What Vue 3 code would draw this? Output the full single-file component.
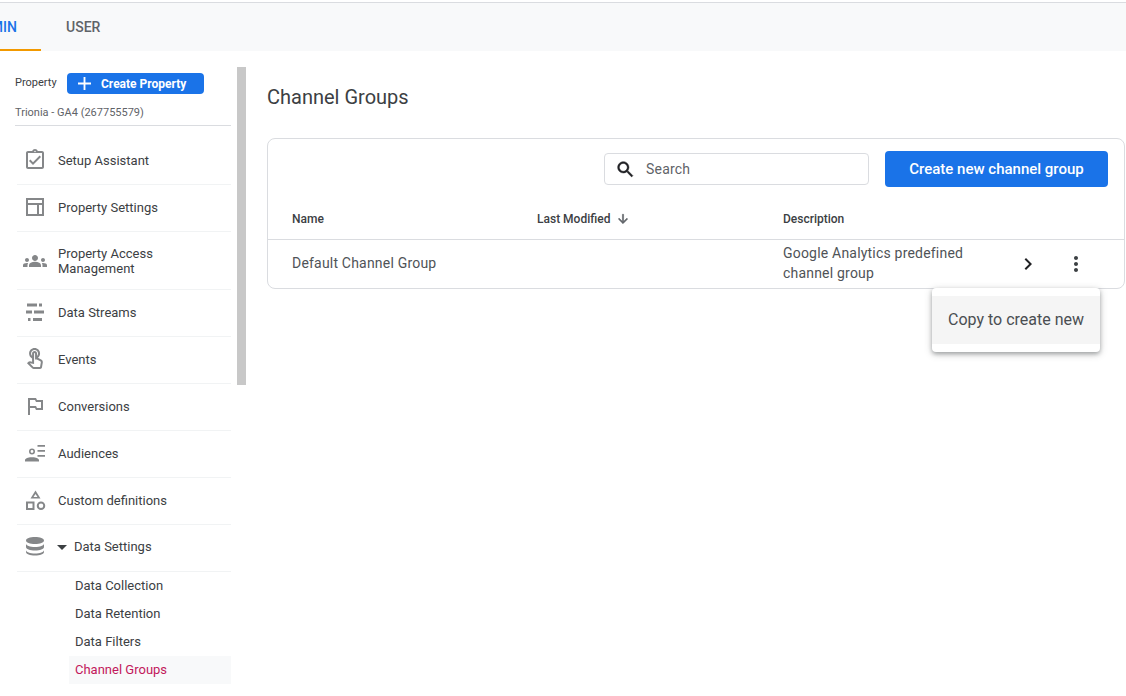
<template>
	<div class="page">
		<div class="tabs">
			<div class="tab tab-active">ADMIN</div>
			<div class="tab">USER</div>
		</div>

		<div class="content">
			<aside class="sidebar">
				<div class="property-head">
					<span class="property-label">Property</span>
					<button class="create-property">
						<svg class="plus" viewBox="0 0 14 14"><path d="M6 0h2v6h6v2H8v6H6V8H0V6h6z" /></svg>
						<span>Create Property</span>
					</button>
				</div>
				<div class="property-name">Trionia - GA4 (267755579)</div>

				<nav class="nav">
					<div
						v-for="item in navItems"
						:key="item.label"
						class="nav-row"
						:class="{ 'nav-tall': item.tall, 'nav-open': item.open }"
					>
						<svg class="nav-icon" viewBox="0 0 24 24"><path :d="item.icon" fill-rule="evenodd" /></svg>
						<span v-if="item.open" class="caret"></span>
						<span class="nav-label">{{ item.label }}</span>
					</div>
					<div class="sub-nav">
						<div
							v-for="sub in subItems"
							:key="sub"
							class="sub-row"
							:class="{ 'sub-active': sub === 'Channel Groups' }"
						>{{ sub }}</div>
					</div>
				</nav>
				<div class="scroll-thumb"></div>
			</aside>

			<main class="main">
				<h1 class="title">Channel Groups</h1>

				<section class="card">
					<div class="toolbar">
						<div class="search">
							<svg class="search-icon" viewBox="0 0 24 24"><path d="M15.5 14h-.79l-.28-.27C15.41 12.59 16 11.11 16 9.5 16 5.91 13.09 3 9.5 3S3 5.91 3 9.5 5.91 16 9.5 16c1.61 0 3.09-.59 4.23-1.57l.27.28v.79l5 4.99L20.49 19l-4.99-5zm-6 0C7.01 14 5 11.99 5 9.5S7.01 5 9.5 5 14 7.01 14 9.5 11.99 14 9.5 14z" /></svg>
							<span>Search</span>
						</div>
						<button class="create-group">Create new channel group</button>
					</div>

					<div class="table-head">
						<span>Name</span>
						<span class="sort-col">
							Last Modified
							<svg class="sort-icon" viewBox="0 0 24 24"><path d="M20 12l-1.41-1.41L13 16.17V4h-2v12.17l-5.58-5.59L4 12l8 8 8-8z" /></svg>
						</span>
						<span>Description</span>
					</div>

					<div class="table-row">
						<span>Default Channel Group</span>
						<span></span>
						<span class="desc">Google Analytics predefined channel group</span>
						<span class="actions">
							<svg class="chevron" viewBox="0 0 24 24"><path d="M8.59 16.59L13.17 12 8.59 7.41 10 6l6 6-6 6z" /></svg>
							<svg class="kebab" viewBox="0 0 24 24"><path d="M12 8c1.1 0 2-.9 2-2s-.9-2-2-2-2 .9-2 2 .9 2 2 2zm0 2c-1.1 0-2 .9-2 2s.9 2 2 2 2-.9 2-2-.9-2-2-2zm0 6c-1.1 0-2 .9-2 2s.9 2 2 2 2-.9 2-2-.9-2-2-2z" /></svg>
						</span>
					</div>

					<div class="menu">
						<div class="menu-item">Copy to create new</div>
					</div>
				</section>
			</main>
		</div>
	</div>
</template>

<script setup>
const navItems = [
	{
		label: 'Setup Assistant',
		icon: 'M19 3h-4.18C14.4 1.84 13.3 1 12 1s-2.4.84-2.82 2H5c-1.1 0-2 .9-2 2v14c0 1.1.9 2 2 2h14c1.1 0 2-.9 2-2V5c0-1.1-.9-2-2-2zm-7-.25c.41 0 .75.34.75.75s-.34.75-.75.75-.75-.34-.75-.75.34-.75.75-.75zM19 19H5V5h14v14zM18 9l-1.41-1.42-6.59 6.59-2.58-2.57-1.42 1.41 4 4z',
	},
	{
		label: 'Property Settings',
		icon: 'M3 3h18v18H3zM5 5v3h14V5zM5 10v9h9v-9zM16 10v9h3v-9z',
	},
	{
		label: 'Property Access Management',
		tall: true,
		icon: 'M4 13c1.1 0 2-.9 2-2s-.9-2-2-2-2 .9-2 2 .9 2 2 2zm1.13 1.1C4.76 14.04 4.39 14 4 14c-.99 0-1.93.21-2.78.58C.48 14.9 0 15.62 0 16.43V18h4.5v-1.61c0-.83.23-1.61.63-2.29zM20 13c1.1 0 2-.9 2-2s-.9-2-2-2-2 .9-2 2 .9 2 2 2zm4 3.43c0-.81-.48-1.53-1.22-1.85C21.93 14.21 20.99 14 20 14c-.39 0-.76.04-1.13.1.4.68.63 1.46.63 2.29V18H24v-1.57zm-7.76-2.78c-1.17-.52-2.61-.9-4.24-.9s-3.07.39-4.24.9C6.68 14.13 6 15.21 6 16.39V18h12v-1.61c0-1.18-.68-2.26-1.76-2.74zM12 12c1.66 0 3-1.34 3-3s-1.34-3-3-3-3 1.34-3 3 1.34 3 3 3z',
	},
	{
		label: 'Data Streams',
		icon: 'M4 3.500h10v3H4zM16 3.500h3v3h-3zM3 10.500h6v3H3zM11 10.500h10v3H11zM5 18h2.500v3H5zM10 18h9v3h-9z',
	},
	{
		label: 'Events',
		icon: 'M18.19 12.44l-3.24-1.62c1.29-1 2.12-2.56 2.12-4.32 0-3.03-2.47-5.5-5.5-5.5s-5.5 2.47-5.5 5.5c0 2.13 1.22 3.98 3 4.89v3.26c-2.15-.46-2.02-.44-2.26-.44-.53 0-1.03.21-1.41.59L4 16.22l5.09 5.09c.43.44 1.03.69 1.65.69h6.3c.98 0 1.81-.7 1.97-1.67l.8-4.71c.22-1.3-.43-2.58-1.62-3.18zm-.35 2.85L17.04 20h-6.3c-.09 0-.17-.04-.24-.1l-3.68-3.68 4.25.89V6.5c0-.28.22-.5.5-.5s.5.22.5.5v6h1.76l3.46 1.73c.39.2.61.63.55 1.06zM8.07 6.5c0-1.93 1.57-3.5 3.5-3.5s3.5 1.57 3.5 3.5c0 .95-.38 1.81-1 2.44V6.5c0-1.38-1.12-2.5-2.5-2.5s-2.5 1.12-2.5 2.5v2.44c-.62-.63-1-1.49-1-2.44z',
	},
	{
		label: 'Conversions',
		icon: 'M14 6l-1-2H5v17h2v-7h5l1 2h7V6h-6zm4 8h-4l-1-2H7V6h5l1 2h5v6z',
	},
	{
		label: 'Audiences',
		icon: 'M9 7.500a3 3 0 1 1 0 6 3 3 0 0 1 0-6zm0 1.600a1.400 1.400 0 1 0 0 2.800 1.400 1.400 0 0 0 0-2.800zM2 20.500v-1.500c0-1.500 3.500-2.700 6-2.700h2c2.500 0 6 1.200 6 2.700v1.500zM14.500 4h7.500v1.700h-7.500zM14.500 9h7.500v1.700h-7.500zM14.500 14h7.500v1.700h-7.500z',
	},
	{
		label: 'Custom definitions',
		icon: 'M12.500 2.500l5 8h-10zM12.500 6l-2 3h4zM3 13.500h8.500V22H3zM5 15.500V20h4.500v-4.500zM18 13.500a4.250 4.250 0 1 1 0 8.500 4.250 4.250 0 0 1 0-8.500zm0 2a2.250 2.250 0 1 0 0 4.500 2.250 2.250 0 0 0 0-4.500z',
	},
	{
		label: 'Data Settings',
		open: true,
		icon: 'M3 6.500C3 4.500 7 3 12 3s9 1.500 9 3.500S17 10 12 10 3 8.500 3 6.500zM3 9.500c0 2 4 3.500 9 3.500s9-1.500 9-3.500v3.500c0 2-4 3.500-9 3.500S3 15 3 13zM3 16c0 2 4 3.500 9 3.500s9-1.500 9-3.500v2c0 2-4 3.500-9 3.500S3 20 3 18z',
	},
];

const subItems = ['Data Collection', 'Data Retention', 'Data Filters', 'Channel Groups'];
</script>

<style scoped>
.page {
	width: 1126px;
	height: 696px;
	overflow: hidden;
	background: #fff;
	font-family: Roboto, "Liberation Sans", sans-serif;
	color: #3c4043;
}

/* Tabs */
.tabs {
	display: flex;
	height: 48px;
	margin-top: 2px;
	border-top: 1px solid #dadce0;
	background: #f8f9fa;
}

.tab {
	display: flex;
	align-items: center;
	padding: 2px 25px 0;
	font-size: 14px;
	font-weight: 500;
	color: #5f6368;
	border-bottom: 2px solid transparent;
}

.tab-active {
	justify-content: flex-end;
	width: 100px;
	margin-left: -59px;
	padding-right: 24px;
	box-sizing: border-box;
	color: #1a73e8;
	border-bottom-color: #f29900;
}

.content {
	display: flex;
}

/* Sidebar */
.sidebar {
	position: relative;
	width: 216px;
	flex-shrink: 0;
	padding: 22px 16px 0 15px;
}

.property-head {
	display: flex;
	align-items: center;
	height: 21px;
}

.property-label {
	width: 52px;
	padding-bottom: 2px;
	font-size: 11px;
}

.create-property {
	display: flex;
	align-items: center;
	width: 137px;
	height: 21px;
	padding: 0 0 0 11px;
	border: 0;
	border-radius: 4px;
	background: #1a73e8;
	color: #fff;
	font-family: Roboto, sans-serif;
	font-size: 12px;
	font-weight: 700;
}

.plus {
	width: 13px;
	height: 13px;
	margin-right: 10px;
	fill: #fff;
}

.property-name {
	height: 32px;
	padding-top: 12px;
	box-sizing: border-box;
	border-bottom: 1px solid #dadce0;
	font-size: 11px;
	line-height: 13px;
	color: #5f6368;
}

.nav {
	margin: 12px 0 0 2px;
}

.nav-row {
	display: flex;
	align-items: center;
	min-height: 47px;
	padding: 12px 0 14px 6px;
	box-sizing: border-box;
	border-bottom: 1px solid #f1f3f4;
	font-size: 13px;
	line-height: 15px;
}

.nav-tall {
	padding: 14px 0 13px 6px;
}

.nav-open {
	padding-bottom: 16px;
}

.nav-icon {
	width: 24px;
	height: 24px;
	margin: -6px 11px -6px 0;
	flex-shrink: 0;
	fill: #858789;
}

.nav-label {
	width: 130px;
}

.caret {
	width: 0;
	height: 0;
	margin: 2px 7px 0 -1px;
	border-left: 5px solid transparent;
	border-right: 5px solid transparent;
	border-top: 5px solid #3c4043;
}

.sub-nav {
	padding-left: 52px;
}

.sub-row {
	height: 28px;
	padding-left: 6px;
	font-size: 13px;
	line-height: 27px;
}

.sub-active {
	background: #f8f9fa;
	color: #c2185b;
}

.scroll-thumb {
	position: absolute;
	top: 16px;
	left: 237px;
	width: 9px;
	height: 318px;
	background: #c8c8c8;
}

/* Main */
.main {
	flex: 1;
	min-width: 0;
	padding-left: 20px;
}

.title {
	height: 53px;
	margin: 34px 0 0;
	font-size: 20px;
	font-weight: 400;
	line-height: 24px;
	color: #3c4043;
}

.card {
	position: relative;
	width: 858px;
	height: 151px;
	box-sizing: border-box;
	border: 1px solid #dadce0;
	border-radius: 8px;
}

.toolbar {
	display: flex;
	justify-content: flex-end;
	align-items: center;
	gap: 16px;
	height: 60px;
	padding-right: 16px;
}

.search {
	display: flex;
	align-items: center;
	width: 265px;
	height: 32px;
	box-sizing: border-box;
	padding-left: 10px;
	border: 1px solid #dadce0;
	border-radius: 4px;
	font-size: 14px;
	letter-spacing: 0.2px;
	color: #5f6368;
}

.search-icon {
	width: 21px;
	height: 21px;
	margin-right: 10px;
	fill: #202124;
	stroke: #202124;
	stroke-width: 0.5;
}

.create-group {
	width: 223px;
	height: 36px;
	border: 0;
	border-radius: 4px;
	background: #1a73e8;
	color: #fff;
	font-family: Roboto, sans-serif;
	font-size: 15px;
	font-weight: 500;
}

.table-head,
.table-row {
	display: grid;
	grid-template-columns: 245px 246px 232px 1fr;
	padding-left: 24px;
	align-items: center;
}

.table-head {
	height: 40px;
	border-bottom: 1px solid #dadce0;
	font-size: 12px;
	font-weight: 500;
	color: #3c4043;
}

.sort-col {
	display: flex;
	align-items: center;
}

.sort-icon {
	width: 14px;
	height: 14px;
	margin-left: 6px;
	fill: #5f6368;
	stroke: #5f6368;
	stroke-width: 1;
}

.table-row {
	height: 48px;
	padding-bottom: 2px;
	box-sizing: border-box;
	font-size: 14px;
	line-height: 20px;
	letter-spacing: 0.2px;
	color: #4f5357;
}

.desc {
	width: 190px;
}

.actions {
	display: flex;
	align-items: center;
	margin: 2px 0 0 1px;
}

.chevron {
	width: 24px;
	height: 24px;
	fill: #202124;
}

.kebab {
	width: 24px;
	height: 24px;
	margin-left: 24px;
	fill: #3c4043;
}

/* Popup menu */
.menu {
	position: absolute;
	top: 149px;
	left: 664px;
	width: 168px;
	padding: 8px 0;
	border-radius: 4px;
	background: #fff;
	box-shadow: 0 2px 4px rgba(60, 64, 67, 0.4), 0 2px 8px rgba(60, 64, 67, 0.2);
}

.menu-item {
	height: 48px;
	padding-left: 16px;
	background: #f5f5f5;
	font-size: 16px;
	line-height: 48px;
	color: #4a4e52;
}
</style>
